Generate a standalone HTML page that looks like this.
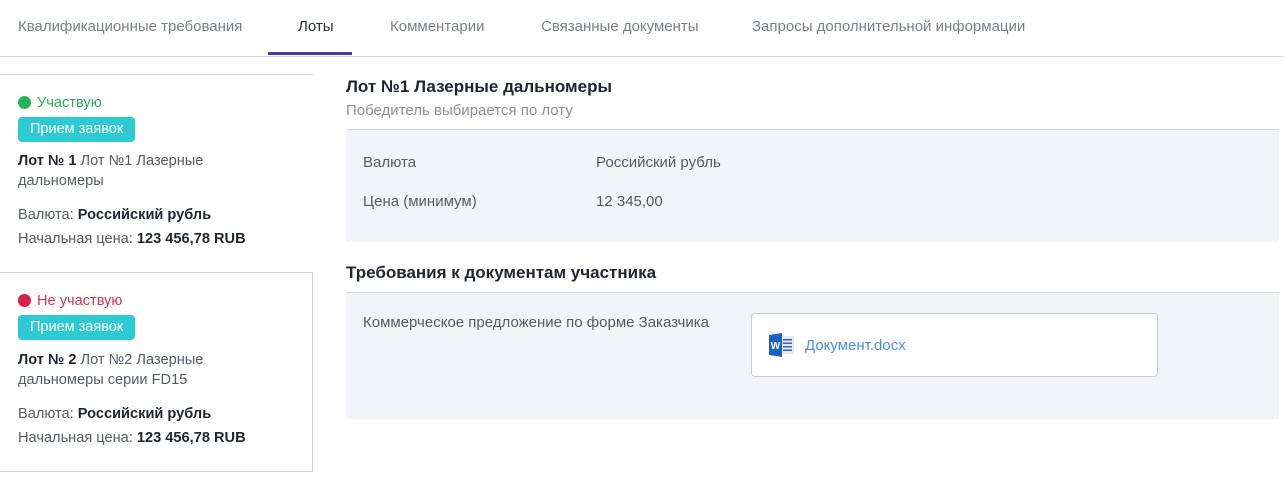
<!DOCTYPE html>
<html><head><meta charset="utf-8"><style>
body{margin:0;width:1284px;height:486px;background:#fff;font-family:"Liberation Sans",sans-serif;font-size:15px;color:#2a2f3a;position:relative;overflow:hidden}
.a{position:absolute;white-space:nowrap}
.tab{position:absolute;top:18px;color:#7a7f8c;font-size:15px}
.g{color:#555b66}
.l{font-size:14.6px}
.badge{position:absolute;left:18px;background:#2ecad3;color:#fff;border-radius:4px;height:25px;line-height:25px;padding:0 12px;font-size:14.5px;white-space:nowrap}
.dot{display:inline-block;width:13px;height:13px;border-radius:50%;vertical-align:-2px;margin-right:6px}
b{color:#1f2430}
</style></head><body>
<div class="tab" style="left:18px">Квалификационные требования</div>
<div class="tab" style="left:298px;color:#2a2f3a">Лоты</div>
<div class="tab" style="left:390px">Комментарии</div>
<div class="tab" style="left:541px">Связанные документы</div>
<div class="tab" style="left:752px">Запросы дополнительной информации</div>
<div class="a" style="left:268px;top:52px;width:84px;height:3px;background:#4b3aa8"></div>
<div class="a" style="left:0;top:56px;width:1284px;height:1px;background:#d3d5dc"></div>

<div class="a" style="left:0;top:74px;width:313px;height:1px;background:#cfd1d8"></div>
<div class="a l" style="left:18px;top:95px;color:#2eaa5a"><span class="dot" style="background:#27b35a"></span>Участвую</div>
<div class="badge" style="top:117px">Прием заявок</div>
<div class="a g l" style="left:18px;top:151px;line-height:20px;white-space:normal;width:230px"><b>Лот № 1</b> Лот №1 Лазерные дальномеры</div>
<div class="a g l" style="left:18px;top:207px">Валюта: <b>Российский рубль</b></div>
<div class="a g l" style="left:18px;top:231px">Начальная цена: <b>123 456,78 RUB</b></div>

<div class="a" style="left:0;top:272px;width:312px;height:198px;border:1px solid #cfd1d8;border-left:none"></div>
<div class="a l" style="left:18px;top:293px;color:#d8304f"><span class="dot" style="background:#dc1e46"></span>Не участвую</div>
<div class="badge" style="top:315px">Прием заявок</div>
<div class="a g l" style="left:18px;top:350px;line-height:20px;white-space:normal;width:230px"><b>Лот № 2</b> Лот №2 Лазерные дальномеры серии FD15</div>
<div class="a g l" style="left:18px;top:406px">Валюта: <b>Российский рубль</b></div>
<div class="a g l" style="left:18px;top:430px">Начальная цена: <b>123 456,78 RUB</b></div>

<div class="a" style="left:346px;top:77px;font-size:17px;font-weight:bold;color:#1f2430">Лот №1 Лазерные дальномеры</div>
<div class="a" style="left:346px;top:102px;color:#8a8f9a">Победитель выбирается по лоту</div>
<div class="a" style="left:346px;top:129px;width:933px;height:1px;background:#d3d5dc"></div>
<div class="a" style="left:346px;top:130px;width:933px;height:112px;background:#f3f4f8"></div>
<div class="a g" style="left:363px;top:154px">Валюта</div>
<div class="a g" style="left:596px;top:154px">Российский рубль</div>
<div class="a g" style="left:363px;top:193px">Цена (минимум)</div>
<div class="a g" style="left:596px;top:193px">12 345,00</div>

<div class="a" style="left:346px;top:263px;font-size:17px;font-weight:bold;color:#1f2430">Требования к документам участника</div>
<div class="a" style="left:346px;top:292px;width:933px;height:1px;background:#d3d5dc"></div>
<div class="a" style="left:346px;top:293px;width:933px;height:126px;background:#f3f4f8"></div>
<div class="a g" style="left:363px;top:314px">Коммерческое предложение по форме Заказчика</div>
<div class="a" style="left:751px;top:313px;width:405px;height:62px;background:#fff;border:1px solid #c9ccd5;border-radius:4px"></div>
<svg class="a" style="left:769px;top:333px" width="26" height="24" viewBox="0 0 26 24">
<rect x="9" y="3" width="16" height="18" fill="#e6e9ef"/>
<rect x="14" y="6" width="9" height="1.5" fill="#2b65c4"/><rect x="14" y="9.5" width="9" height="1.5" fill="#2b65c4"/><rect x="14" y="13" width="9" height="1.5" fill="#2b65c4"/><rect x="14" y="16.5" width="9" height="1.5" fill="#2b65c4"/>
<path d="M0 2 L13 0 L13 24 L0 22 Z" fill="#1f5fc0"/>
<text x="6.5" y="16" font-size="10" font-weight="bold" fill="#fff" text-anchor="middle" font-family="Liberation Sans">W</text>
</svg>
<div class="a" style="left:805px;top:337px;color:#4d8ee0">Документ.docx</div>
</body></html>
